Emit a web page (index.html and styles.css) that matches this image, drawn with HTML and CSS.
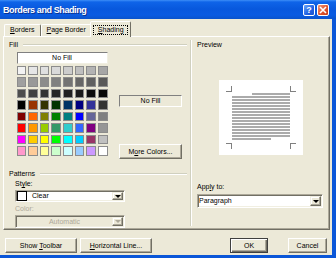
FILE: index.html
```html
<!DOCTYPE html>
<html lang="en">
<head>
    <meta charset="UTF-8">
    <title>Borders and Shading</title>
    <link rel="stylesheet" href="styles.css">
</head>
<body>
<div class="window">
    <div class="titlebar">
        <span class="title">Borders and Shading</span>
        <span class="caption-btn help">?</span>
        <span class="caption-btn close">
            <svg width="8" height="8" viewBox="0 0 8 8"><path d="M1 1L7 7M7 1L1 7" stroke="#fff" stroke-width="1.6"/></svg>
        </span>
    </div>

    <div class="client">
        <div class="tabs">
            <span class="tab"><u>B</u>orders</span>
            <span class="tab"><u>P</u>age Border</span>
            <span class="tab active"><span class="focus"><u>S</u>hading</span></span>
        </div>

        <div class="panel">
            <div class="col-left">
                <div class="legend"><span>Fill</span></div>

                <div class="fill-row">
                    <div class="palette">
                        <div class="no-fill">No Fill</div>
                        <div class="swatches" id="swatches"></div>
                    </div>
                    <div class="fill-side">
                        <div class="current">No Fill</div>
                        <div class="btn more">M<u>o</u>re Colors...</div>
                    </div>
                </div>

                <div class="legend patterns"><span>Patterns</span></div>
                <div class="field-label">St<u>y</u>le:</div>
                <div class="select style-select">
                    <span class="pattern-box"></span>
                    <span class="value">Clear</span>
                    <span class="arrow"></span>
                </div>
                <div class="field-label disabled">Color:</div>
                <div class="select color-select disabled">
                    <span class="value center">Automatic</span>
                    <span class="arrow"></span>
                </div>
            </div>

            <div class="vsep"></div>

            <div class="col-right">
                <div class="preview-label">Preview</div>
                <div class="page">
                    <span class="mark tl"></span>
                    <span class="mark tr"></span>
                    <div class="text">
                        <div class="ln first"></div>
                        <div class="ln"></div>
                        <div class="ln"></div>
                        <div class="ln"></div>
                        <div class="ln"></div>
                        <div class="ln"></div>
                        <div class="ln"></div>
                        <div class="ln"></div>
                        <div class="ln"></div>
                        <div class="ln"></div>
                        <div class="ln"></div>
                        <div class="ln"></div>
                        <div class="ln"></div>
                        <div class="ln"></div>
                        <div class="ln"></div>
                        <div class="ln last"></div>
                    </div>
                    <span class="mark bl"></span>
                    <span class="mark br"></span>
                </div>
                <div class="field-label apply">App<u>l</u>y to:</div>
                <div class="select apply-select">
                    <span class="value">Paragraph</span>
                    <span class="arrow"></span>
                </div>
            </div>
        </div>

        <div class="footer">
            <div class="btn wide">Show <u>T</u>oolbar</div>
            <div class="btn wide"><u>H</u>orizontal Line...</div>
            <div class="btn ok">OK</div>
            <div class="btn cancel">Cancel</div>
        </div>
    </div>
</div>

<script>
    // Word shading palette, 8 x 8
    const colors = [
        "#f2f2f2", "#e6e6e6", "#dfdfdf", "#d9d9d9", "#cccccc", "#bfbfbf", "#b3b3b3", "#a6a6a6",
        "#9f9f9f", "#999999", "#8c8c8c", "#808080", "#737373", "#666666", "#606060", "#595959",
        "#4d4d4d", "#404040", "#333333", "#262626", "#202020", "#1a1a1a", "#0d0d0d", "#080808",
        "#000000", "#993300", "#333300", "#003300", "#003366", "#000080", "#333399", "#333333",
        "#800000", "#ff6600", "#808000", "#008000", "#008080", "#0000ff", "#666699", "#808080",
        "#ff0000", "#ff9900", "#99cc00", "#339966", "#33cccc", "#3366ff", "#800080", "#969696",
        "#ff00ff", "#ffcc00", "#ffff00", "#00ff00", "#00ffff", "#00ccff", "#993366", "#c0c0c0",
        "#ff99cc", "#ffcc99", "#ffff99", "#ccffcc", "#ccffff", "#99ccff", "#cc99ff", "#ffffff"
    ];
    const grid = document.getElementById("swatches");
    colors.forEach(c => {
        const cell = document.createElement("div");
        cell.className = "swatch";
        cell.style.background = c;
        grid.appendChild(cell);
    });
</script>
</body>
</html>
```

FILE: styles.css
```css
* {
    box-sizing: border-box;
}
body {
    margin: 0;
    font-family: "Liberation Sans", Arial, sans-serif;
    font-size: 7px;
    line-height: 8px;
    color: #000;
    background: #0a56d8;
}
u {
    text-decoration-thickness: 1px;
    text-underline-offset: 1px;
}
.window {
    width: 336px;
    height: 258px;
    display: flex;
    flex-direction: column;
    background: #0a56d8;
}

/* title bar */
.titlebar {
    height: 19px;
    flex: none;
    display: flex;
    align-items: center;
    gap: 2px;
    padding: 0 7px 0 3px;
    color: #fff;
    background: linear-gradient(#3d8ef7 0, #0f64e8 2px, #0858dd 9px, #0a5be2 15px, #0a53cc 19px);
}
.title {
    flex: 1;
    font-weight: bold;
    font-size: 9px;
    letter-spacing: -0.4px;
    text-shadow: 1px 1px #0b3290;
}
.caption-btn {
    width: 12px;
    height: 12px;
    border: 1px solid #fff;
    border-radius: 2px;
    display: flex;
    align-items: center;
    justify-content: center;
    font-weight: bold;
    font-size: 9px;
    color: #fff;
}
.help {
    background: linear-gradient(135deg, #6aa6fa, #2160e2 60%, #1b52cc);
}
.close {
    background: linear-gradient(135deg, #f29a7a, #e0552f 55%, #c53d18);
}

/* dialog body */
.client {
    flex: 1;
    margin: 0 4px 3px 0;
    padding: 2px 2px 0 3px;
    background: #ece9d8;
    display: flex;
    flex-direction: column;
}
.tabs {
    display: flex;
    align-items: flex-end;
    height: 16px;
    margin-bottom: -1px;
    padding-left: 1px;
}
.tab {
    height: 12px;
    margin-bottom: 1px;
    padding: 1px 5px 0;
    border: 1px solid;
    border-bottom: none;
    border-color: #fff #716f64 transparent #fff;
    border-radius: 2px 2px 0 0;
}
.tab.active {
    height: 16px;
    margin-bottom: 0;
    margin-left: -2px;
    padding: 3px 2px 0;
    background: #ece9d8;
    position: relative;
    z-index: 1;
}
.focus {
    display: block;
    padding: 0 3px 0 4px;
    border: 1px dotted #000;
}
.panel {
    height: 194px;
    display: flex;
    border: 1px solid;
    border-color: #fff #716f64 #716f64 #fff;
    box-shadow: inset -1px -1px #aca899;
}

/* left: fill and patterns */
.col-left {
    width: 186px;
    padding: 4px 3px 0 5px;
}
.legend {
    display: flex;
    align-items: center;
    gap: 5px;
    height: 8px;
}
.legend::after {
    content: "";
    flex: 1;
    border-top: 1px solid #d0d0bf;
    border-bottom: 1px solid #fff;
}
.fill-row {
    display: flex;
    margin-top: 3px;
}
.palette {
    width: 91px;
    margin-left: 7.5px;
}
.no-fill {
    height: 12px;
    line-height: 10px;
    text-align: center;
    background: #fff;
    border: 1px solid;
    border-color: #808080 #f1efe2 #f1efe2 #808080;
}
.swatches {
    display: grid;
    grid-template-columns: repeat(8, 1fr);
    grid-auto-rows: 9.5px;
    gap: 2px;
    margin-top: 1.5px;
}
.swatch {
    border: 1px solid #8c8c8c;
}
.fill-side {
    width: 63px;
    margin-left: 11.5px;
    display: flex;
    flex-direction: column;
}
.current {
    height: 12px;
    margin-top: 43px;
    line-height: 10px;
    text-align: center;
    border: 1px solid;
    border-color: #808080 #fff #fff #808080;
}
.more {
    height: 13px;
    margin-top: 37px;
}
.patterns {
    margin-top: 11px;
}
.field-label {
    margin: 2px 0 0 6px;
}
.field-label.disabled {
    margin-top: 3px;
    color: #aca899;
}
.select {
    display: flex;
    align-items: stretch;
    padding: 1px;
    background: #fff;
    border: 1px solid;
    border-color: #aca899 #fff #fff #aca899;
    box-shadow: inset 1px 1px #716f64, inset -1px -1px #f1efe2;
}
.select .value {
    display: flex;
    align-items: center;
}
.select .center {
    flex: 1;
    justify-content: center;
}
.style-select {
    width: 110px;
    height: 12px;
    margin: 2px 0 0 6px;
}
.pattern-box {
    width: 10px;
    margin: -1px 0;
    background: #fff;
    border: 1px solid #000;
}
.style-select .value {
    margin-left: 5px;
}
.color-select {
    width: 110px;
    height: 13px;
    margin: 2px 0 0 6px;
}
.select.disabled {
    background: #ece9d8;
    color: #aca899;
}
.arrow {
    width: 11px;
    margin-left: auto;
    display: flex;
    align-items: center;
    justify-content: center;
    background: #ece9d8;
    border: 1px solid;
    border-color: #f1efe2 #716f64 #716f64 #f1efe2;
    box-shadow: inset -1px -1px #aca899, inset 1px 1px #fff;
}
.arrow::after {
    content: "";
    border-left: 3px solid transparent;
    border-right: 3px solid transparent;
    border-top: 3px solid #000;
}
.disabled .arrow::after {
    border-top-color: #aca899;
}

.vsep {
    width: 2px;
    margin: 3px 0;
    border-left: 1px solid #d0d0bf;
    border-right: 1px solid #fff;
}

/* right: preview */
.col-right {
    flex: 1;
    padding: 4px 0 0 5px;
}
.preview-label {
    height: 8px;
}
.page {
    width: 84px;
    height: 75px;
    margin: 31px 0 0 22px;
    background: #fff;
    display: grid;
    grid-template-columns: 13px 58px 13px;
    grid-template-rows: 12px 51px 12px;
}
.mark {
    width: 6px;
    height: 6px;
    border: 0 solid #808080;
}
.mark.tl {
    grid-area: 1 / 1;
    justify-self: end;
    align-self: end;
    border-right-width: 1px;
    border-bottom-width: 1px;
}
.mark.tr {
    grid-area: 1 / 3;
    justify-self: start;
    align-self: end;
    border-left-width: 1px;
    border-bottom-width: 1px;
}
.mark.bl {
    grid-area: 3 / 1;
    justify-self: end;
    align-self: start;
    border-right-width: 1px;
    border-top-width: 1px;
}
.mark.br {
    grid-area: 3 / 3;
    justify-self: start;
    align-self: start;
    border-left-width: 1px;
    border-top-width: 1px;
}
.text {
    grid-area: 2 / 2;
    display: flex;
    flex-direction: column;
    gap: 1px;
    padding-top: 1px;
}
.ln {
    height: 2px;
    background: #ababab;
}
.ln.first {
    width: 38px;
    align-self: flex-end;
}
.ln.last {
    width: 39px;
}
.apply {
    margin: 28px 0 0 0;
}
.apply-select {
    width: 126px;
    height: 14px;
    margin-top: 3px;
}

/* buttons */
.btn {
    height: 15px;
    line-height: 13px;
    text-align: center;
    background: #ece9d8;
    border: 1px solid;
    border-color: #fff #716f64 #716f64 #fff;
    box-shadow: inset -1px -1px #aca899;
}
.footer {
    display: flex;
    gap: 3px;
    margin-top: 8px;
    padding: 0 3px 0 2px;
}
.btn.wide {
    width: 72px;
}
.btn.ok {
    width: 38px;
    margin-left: auto;
    border-color: #404040;
    box-shadow: inset 1px 1px #fff, inset -1px -1px #716f64, inset -2px -2px #aca899;
}
.btn.cancel {
    width: 39px;
    margin-left: 17px;
}
```
